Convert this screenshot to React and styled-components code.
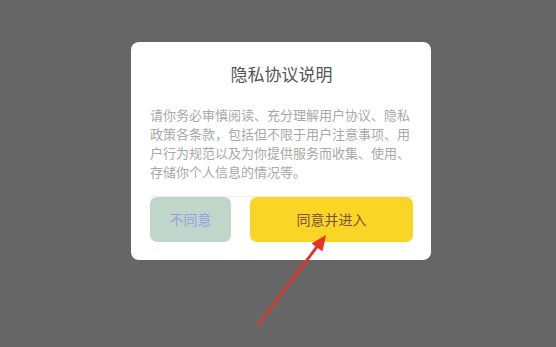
import React from 'react'
import styled, { createGlobalStyle } from 'styled-components'

const GlobalStyle = createGlobalStyle`
  html, body {
    margin: 0;
    padding: 0;
    background: #666666;
  }
  body {
    font-family: "Noto Sans CJK SC", "Noto Sans", sans-serif;
  }
`

const Page = styled.div`
  position: relative;
  width: 556px;
  height: 347px;
  box-sizing: border-box;
  padding: 42px 0 0 131px;
  background: #666666;
  overflow: hidden;
`

const Dialog = styled.div`
  width: 300px;
  box-sizing: border-box;
  background: #ffffff;
  border-radius: 8px;
  padding: 20px 18px 18px 19px;
  display: flex;
  flex-direction: column;
`

const Title = styled.h2`
  margin: 0;
  font-size: 17px;
  line-height: 24px;
  font-weight: 400;
  color: #555555;
  text-align: center;
`

const Body = styled.p`
  margin: 18.5px 0 0;
  font-size: 13px;
  line-height: 19px;
  color: #a8a8a8;
  text-align: left;
  word-break: break-all;
`

const Divider = styled.div`
  height: 1px;
  background: #eeeeee;
  margin-top: 15px;
`

const Actions = styled.div`
  display: flex;
  gap: 19px;
`

const Button = styled.button`
  height: 45px;
  border: none;
  border-radius: 7px;
  font-family: inherit;
  font-size: 14px;
  padding: 0;
  cursor: pointer;
  flex: ${(p) => (p.$primary ? '1' : '0 0 81px')};
  background: ${(p) => (p.$primary ? '#f9d626' : '#c0d6ca')};
  color: ${(p) => (p.$primary ? '#7b5236' : '#9c9edf')};
`

const Overlay = styled.svg`
  position: absolute;
  left: 0;
  top: 0;
  width: 556px;
  height: 347px;
  pointer-events: none;
`

const Arrow = () => (
  <Overlay viewBox="0 0 556 347">
    <polygon
      points="258,325 257.4,324.6 316.2,245.2 318.6,247 259,325.6"
      fill="#e8332a"
    />
    <polygon points="326,235 311.5,243.5 322.5,251.5" fill="#e8332a" />
  </Overlay>
)

export default function App() {
  return (
    <>
      <GlobalStyle />
      <Page>
        <Dialog>
          <Title>隐私协议说明</Title>
          <Body>
            请你务必审慎阅读、充分理解用户协议、隐私政策各条款，包括但不限于用户注意事项、用户行为规范以及为你提供服务而收集、使用、存储你个人信息的情况等。
          </Body>
          <Divider />
          <Actions>
            <Button>不同意</Button>
            <Button $primary>同意并进入</Button>
          </Actions>
        </Dialog>
        <Arrow />
      </Page>
    </>
  )
}
